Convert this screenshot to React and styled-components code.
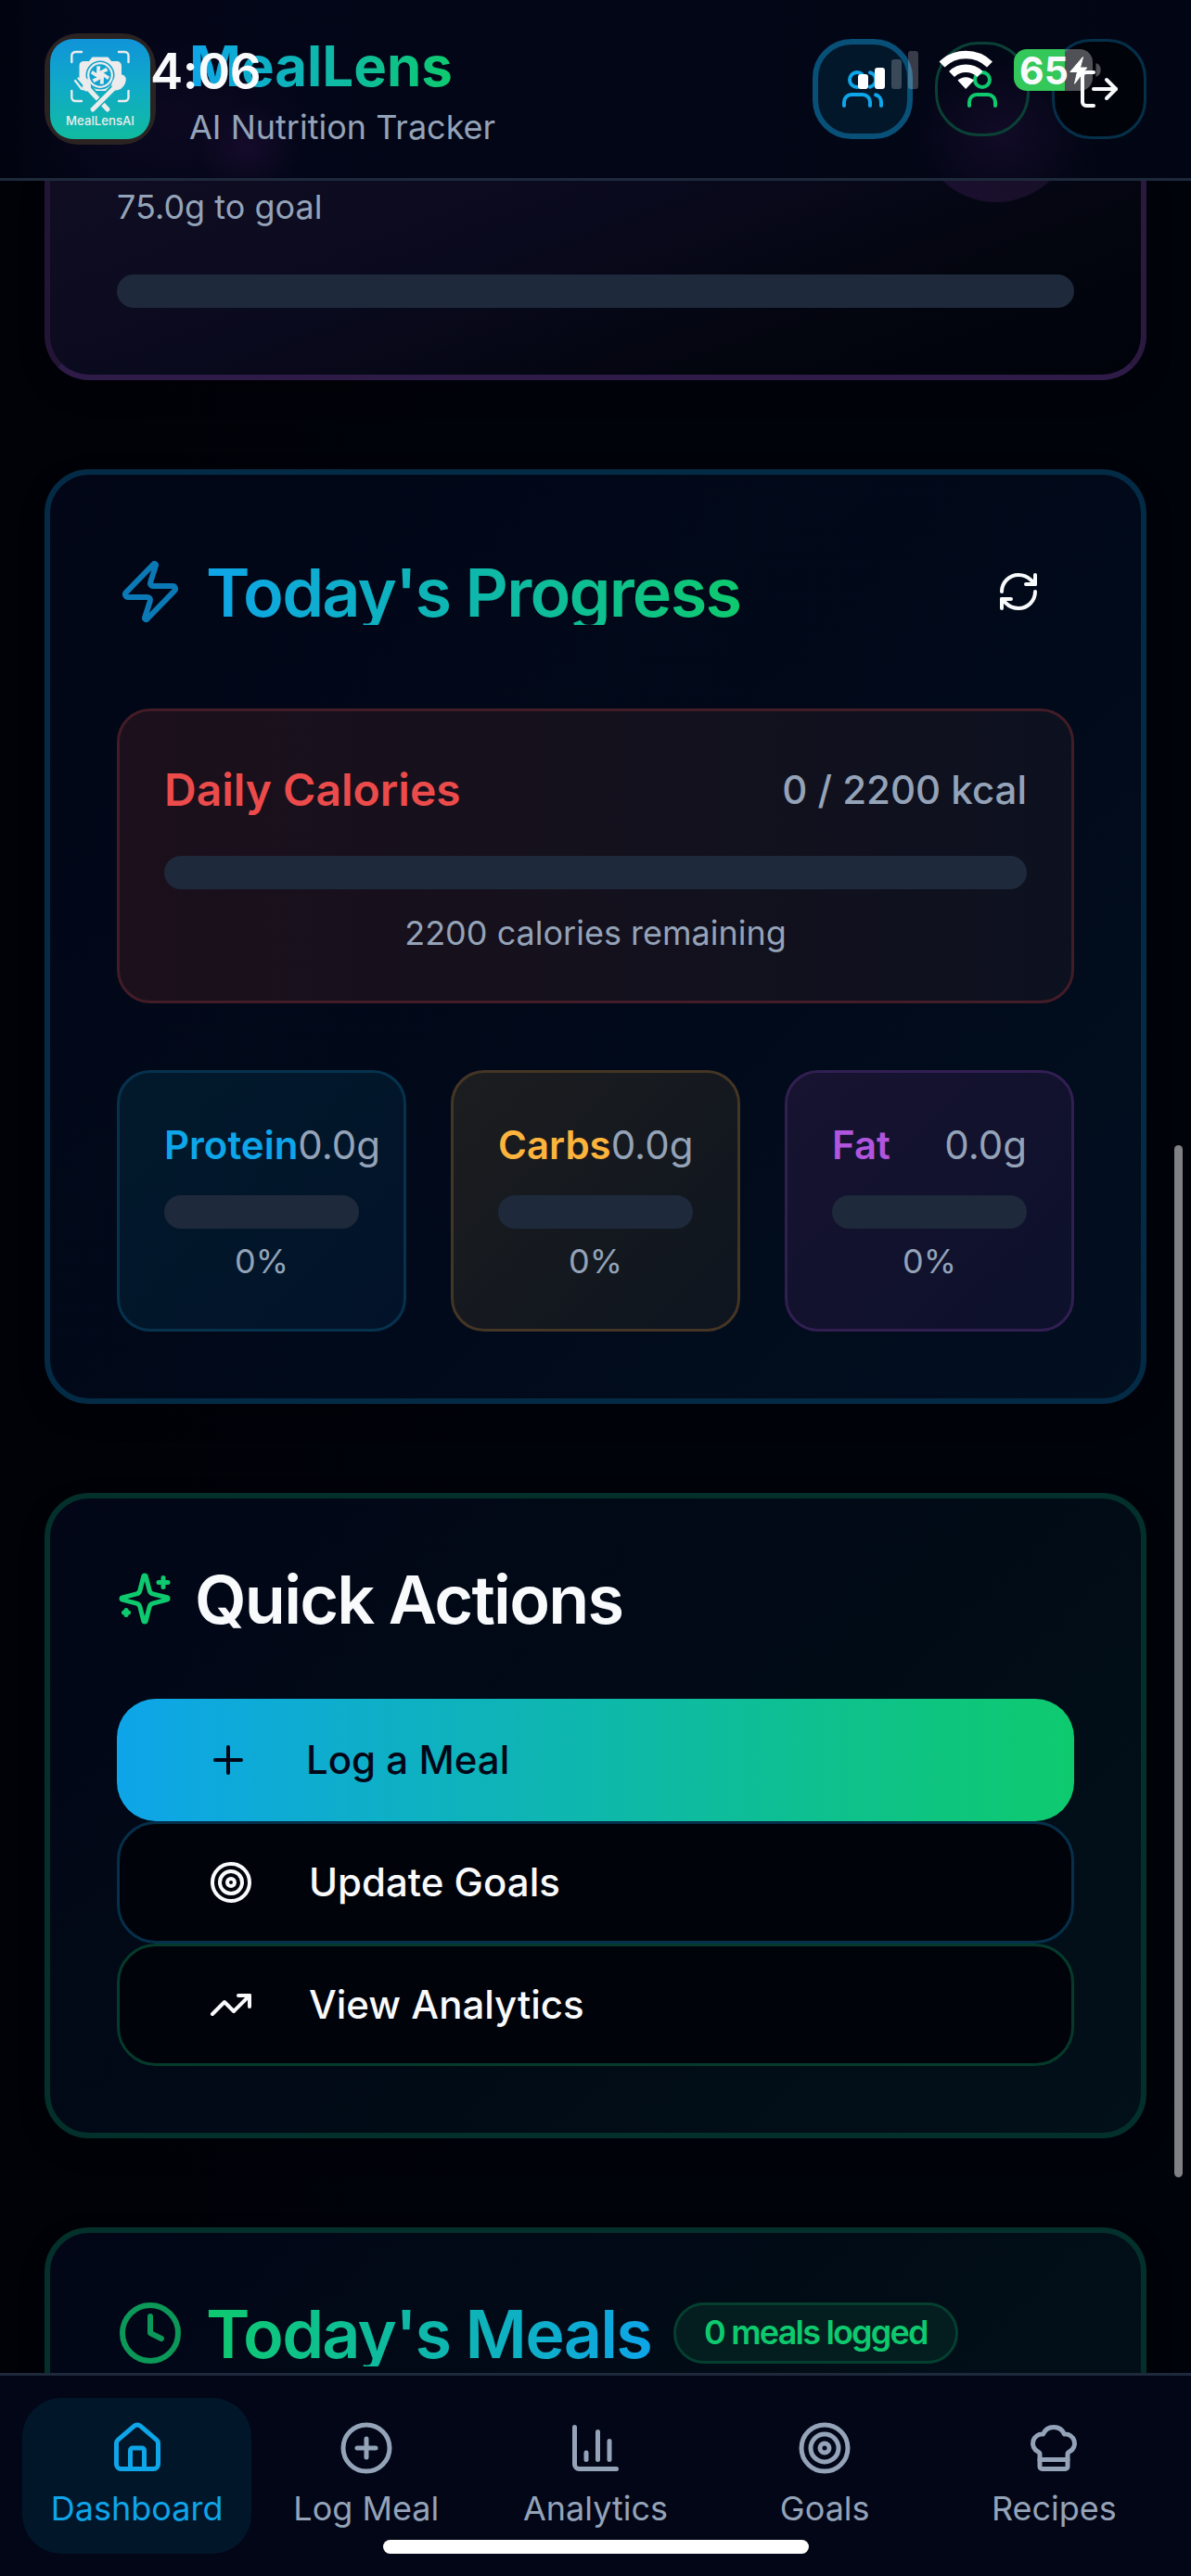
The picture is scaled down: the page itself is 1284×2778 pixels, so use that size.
import React from "react";
import styled, { createGlobalStyle, css } from "styled-components";
import {
  Users, User, LogOut, Zap, RefreshCw, Plus, Target, TrendingUp,
  Clock, House, CirclePlus, ChartColumn, ChefHat,
} from "lucide-react";

const c = {
  blue: "#0ea5e9",
  green: "#0eca6e",
  muted: "#94a3b8",
  text: "#f8fafc",
  track: "#1e293b",
};

const GlobalStyle = createGlobalStyle`
  * { box-sizing: border-box; margin: 0; }
  body {
    margin: 0;
    background: #01030b;
    color: ${c.text};
    font-family: Inter, "Liberation Sans", sans-serif;
  }
`;

const Screen = styled.div`
  position: relative;
  display: flex;
  flex-direction: column;
  width: 1284px;
  height: 2778px;
  overflow: hidden;
  background: linear-gradient(90deg, #000207, #01030b 40%, #01030b);
`;

const Header = styled.header`
  display: flex;
  align-items: center;
  flex: none;
  gap: 36px;
  height: 195px;
  padding: 0 48px;
  border-bottom: 3px solid #1e293b;
  background:
    radial-gradient(ellipse 55px 50px at 268px 160px, rgba(70, 25, 95, 0.22), transparent),
    radial-gradient(ellipse 160px 90px at 190px 130px, rgba(60, 22, 85, 0.15), transparent),
    radial-gradient(ellipse 100px 90px at 1080px 145px, rgba(70, 25, 95, 0.24), transparent),
    linear-gradient(90deg, #01040f, #040618 8%, #020617 40%, #020614);
`;

const LogoTile = styled.div`
  flex: none;
  width: 120px;
  height: 120px;
  padding: 6px;
  border-radius: 36px;
  background: #2b2322;
`;

const LogoFace = styled.div`
  display: flex;
  flex-direction: column;
  align-items: center;
  height: 108px;
  padding-top: 12px;
  border-radius: 25px;
  background: linear-gradient(#1094d8, #10a9c9 45%, #10bba0);
  font-size: 13.2px;
  font-weight: 500;
  line-height: 16px;
  color: #ececec;
`;

const Brand = styled.div`
  flex: 1;
  padding-bottom: 2px;
`;

const gradientText = css`
  width: max-content;
  background: ${(p) =>
    p.$reverse
      ? `linear-gradient(90deg, ${c.green}, ${c.blue})`
      : `linear-gradient(90deg, ${c.blue}, ${c.green})`};
  -webkit-background-clip: text;
  background-clip: text;
  color: transparent;
`;

const BrandName = styled.h1`
  ${gradientText}
  font-size: 60px;
  font-weight: 700;
  line-height: 84px;
`;

const Tagline = styled.p`
  font-size: 36px;
  line-height: 48px;
  color: ${c.muted};
`;

const HeaderActions = styled.div`
  display: flex;
  align-items: center;
  gap: 24px;
`;

const RoundButton = styled.button`
  display: grid;
  place-items: center;
  width: ${(p) => p.$w}px;
  height: ${(p) => p.$h}px;
  padding: 0;
  border: ${(p) => p.$line}px solid ${(p) => p.$edge};
  border-radius: ${(p) => p.$radius}px;
  background: ${(p) => p.$fill};
  color: ${(p) => p.$ink};
`;

const Main = styled.main`
  display: flex;
  flex-direction: column;
  gap: 96px;
  flex: 1;
  min-height: 0;
  padding: 0 48px;
  overflow: hidden;
`;

const Card = styled.section`
  flex: none;
  padding: 72px;
  border: 6px solid ${(p) => p.$edge};
  border-radius: 48px;
  background: ${(p) => p.$fill};
  box-shadow: 0 12px 30px rgba(0, 0, 0, 0.2);
`;

const GoalCard = styled(Card)`
  padding-top: 0;
  border-color: #24153a #2b1940 #2e1b47 #241537;
  border-top: 0;
  border-radius: 0 0 48px 48px;
`;

const GoalRow = styled.div`
  display: flex;
  align-items: flex-start;
  justify-content: space-between;
  margin-bottom: 49px;
`;

const Caption = styled.p`
  padding-top: ${(p) => p.$top || 0}px;
  padding-bottom: ${(p) => p.$bottom || 0}px;
  font-size: 36px;
  line-height: 48px;
  color: ${c.muted};
  text-align: ${(p) => (p.$center ? "center" : "left")};
`;

const GoalDisc = styled.div`
  width: 168px;
  height: 168px;
  margin-top: -145px;
  border-radius: 50%;
  background: linear-gradient(90deg, #1b1030, #180f28);
`;

const Track = styled.div`
  height: 36px;
  border-radius: 18px;
  background: ${c.track};
`;

const CardHead = styled.div`
  display: flex;
  align-items: center;
  gap: 24px;
  height: ${(p) => p.$h}px;
  margin-bottom: 72px;
`;

const Heading = styled.h2`
  ${(p) => !p.$plain && gradientText}
  padding-top: 2px;
  font-size: 72px;
  font-weight: 600;
  line-height: 70px;
  letter-spacing: -1.8px;
`;

const GhostButton = styled.button`
  display: grid;
  place-items: center;
  width: 120px;
  height: 108px;
  margin-left: auto;
  padding: 0;
  border: 0;
  background: none;
  color: ${c.text};
`;

const Panel = styled.div`
  min-width: 0;
  padding: 48px;
  border: 3px solid ${(p) => p.$edge};
  border-radius: 36px;
  background: ${(p) => p.$fill};
`;

const CalorieRow = styled.div`
  display: flex;
  align-items: center;
  justify-content: space-between;
  height: 72px;
  margin-bottom: 36px;
`;

const CalorieLabel = styled.h3`
  font-size: 48px;
  font-weight: 600;
  color: #eb4b4b;
`;

const CalorieValue = styled.span`
  font-size: 42px;
  font-weight: 500;
  color: ${c.muted};
`;

const MacroGrid = styled.div`
  display: grid;
  grid-template-columns: repeat(3, 1fr);
  gap: 48px;
  margin-top: 72px;
`;

const MacroRow = styled.div`
  display: flex;
  justify-content: space-between;
  margin-bottom: 24px;
  font-size: 42px;
  line-height: 60px;
`;

const MacroName = styled.span`
  font-weight: 600;
  color: ${(p) => p.$ink};
`;

const MacroValue = styled.span`
  color: ${c.muted};
`;

const Actions = styled.div`
  display: flex;
  flex-direction: column;
`;

const ActionButton = styled.button`
  display: flex;
  align-items: center;
  gap: 60px;
  height: 132px;
  padding: 0 96px;
  border: ${(p) => (p.$edge ? `3px solid ${p.$edge}` : "0")};
  border-radius: 42px;
  background: ${(p) => p.$fill || "#01030b"};
  color: ${(p) => p.$ink || c.text};
  font: 500 42px/60px Inter, "Liberation Sans", sans-serif;
`;

const Badge = styled.span`
  height: 66px;
  padding: 0 30px;
  border: 3px solid #053f30;
  border-radius: 33px;
  background: #041d1f;
  font-size: 36px;
  font-weight: 600;
  line-height: 58px;
  letter-spacing: -1.8px;
  color: ${c.green};
`;

const Nav = styled.nav`
  display: grid;
  grid-template-columns: repeat(5, 1fr);
  align-items: start;
  flex: none;
  height: 219px;
  padding: 24px 24px 0;
  border-top: 3px solid #1e293b;
  background: #020617;
`;

const NavItem = styled.a`
  display: flex;
  flex-direction: column;
  align-items: center;
  gap: 11px;
  height: 168px;
  padding: 24px 0;
  border-radius: 42px;
  background: ${(p) => (p.$active ? "#02162a" : "none")};
  color: ${(p) => (p.$active ? c.blue : c.muted)};
  font-size: 36px;
  line-height: 48px;
`;

const StatusTime = styled.span`
  position: absolute;
  left: 162px;
  top: 47px;
  font-size: 53px;
  font-weight: 600;
  line-height: 60px;
  letter-spacing: -0.5px;
`;

const StatusIcons = styled.svg`
  position: absolute;
  left: 920px;
  top: 48px;
`;

const BatteryLevel = styled.span`
  position: absolute;
  left: 1099px;
  top: 51px;
  font-size: 41px;
  font-weight: 700;
  line-height: 50px;
`;

const ScrollThumb = styled.div`
  position: absolute;
  right: 9px;
  top: 1235px;
  width: 9px;
  height: 1113px;
  border-radius: 5px;
  background: #808184;
`;

const HomeIndicator = styled.div`
  position: absolute;
  left: 413px;
  bottom: 24px;
  width: 459px;
  height: 15px;
  border-radius: 8px;
  background: #fff;
`;

function LogoMark() {
  return (
    <svg width="64" height="68" viewBox="0 0 64 68" fill="none">
      <path
        d="M1.3 13V6a4 4 0 0 1 4-4H12M52 2h6.500a4 4 0 0 1 4 4v7M62.500 44v7a4 4 0 0 1-4 4H52M12 55H5.300a4 4 0 0 1-4-4v-7"
        stroke="#ececec" strokeWidth="2.400" strokeLinecap="round"
      />
      <path d="M14 12h6l3.500-4.500h17L44 12h6a5 5 0 0 1 5 5v14L44 44H22L9.500 31V17A5 5 0 0 1 14 12Z" fill="#ececec" />
      <circle cx="32" cy="27" r="15.500" fill="#10a3cf" />
      <circle cx="32" cy="27" r="12.800" stroke="#ececec" strokeWidth="2.300" />
      <circle cx="32" cy="27" r="4" fill="#ececec" />
      {[0, 60, 120, 180, 240, 300].map((a) => (
        <path key={a} d="M30 23.500 38.500 19l2 3.500-6 2.500Z" fill="#ececec" transform={`rotate(${a} 32 27)`} />
      ))}
      <path d="m17 38 26 29M48 39 22 67" stroke="#10afba" strokeWidth="8" />
      <path d="m16 38 24 26" stroke="#ececec" strokeWidth="5" strokeLinecap="round" />
      <path d="M47 41 24 64" stroke="#10afba" strokeWidth="8" />
      <path d="M49 39 24 64" stroke="#ececec" strokeWidth="5" strokeLinecap="round" />
      <path d="m5 33 7 9 6 1 3-4-1-5-8-6M8.500 30.500l7 8" stroke="#ececec" strokeWidth="2.200" strokeLinecap="round" strokeLinejoin="round" />
      <path d="m12 40 7-6 3 6-5 5Z" fill="#ececec" />
      <ellipse cx="52" cy="35" rx="6.500" ry="9.500" transform="rotate(38 52 35)" fill="#ececec" />
    </svg>
  );
}

function SparklesIcon() {
  return (
    <svg
      width="60" height="60" viewBox="0 0 24 24" fill="none"
      stroke={c.green} strokeWidth="2" strokeLinecap="round" strokeLinejoin="round"
    >
      <path d="M9.937 15.500A2 2 0 0 0 8.500 14.063l-6.135-1.582a.5.5 0 0 1 0-.962L8.500 9.936A2 2 0 0 0 9.937 8.500l1.582-6.135a.5.5 0 0 1 .963 0L14.063 8.500A2 2 0 0 0 15.500 9.937l6.135 1.581a.5.5 0 0 1 0 .964L15.500 14.063a2 2 0 0 0-1.437 1.437l-1.582 6.135a.5.5 0 0 1-.963 0z" />
      <path d="M20 3v4" />
      <path d="M22 5h-4" />
      <path d="M4 17v2" />
      <path d="M5 18H3" />
    </svg>
  );
}

function StatusGlyphs() {
  return (
    <StatusIcons width="270" height="54" viewBox="920 48 270 54">
      <g fill="#fff">
        <rect x="925" y="80" width="11" height="16" rx="3" />
        <rect x="943" y="73" width="11" height="23" rx="3" />
        <rect x="961" y="64" width="11" height="32" rx="3" opacity=".22" />
        <rect x="979" y="55" width="11" height="41" rx="3" opacity=".22" />
      </g>
      <g fill="none" stroke="#fff" strokeWidth="8.500">
        <path d="M1015.500 69.500a37 37 0 0 1 51.500 0" />
        <path d="M1026 80a22 22 0 0 1 30.500 0" />
      </g>
      <path d="M1041.200 96l-8.700-9.300a12.500 12.500 0 0 1 17.400 0Z" fill="#fff" />
      <path d="M1148 53h16a14 14 0 0 1 14 14v17a14 14 0 0 1-14 14h-16Z" fill="rgba(255,255,255,.31)" />
      <path d="M1148 53h-41a14 14 0 0 0-14 14v17a14 14 0 0 0 14 14h41Z" fill="#34c759" />
      <path d="M1181.500 68a8 8 0 0 1 0 15Z" fill="rgba(255,255,255,.31)" />
      <path
        d="M1167.500 61.500 1153.800 77.500h7.700L1158.500 90.200 1171.800 73h-7.300Z"
        fill="#fff" stroke="#fff" strokeWidth="1" strokeLinejoin="round"
      />
    </StatusIcons>
  );
}

const macros = [
  { name: "Protein", ink: c.blue, edge: "#06324e", fill: "linear-gradient(135deg, #02192b, #021329)" },
  { name: "Carbs", ink: "#fdb43c", edge: "#443524", fill: "linear-gradient(135deg, #1c1d1f, #0e151f)" },
  { name: "Fat", ink: "#b055dd", edge: "#321f52", fill: "linear-gradient(135deg, #171330, #0d112b)" },
];

const tabs = [
  { label: "Dashboard", Icon: House, active: true },
  { label: "Log Meal", Icon: CirclePlus },
  { label: "Analytics", Icon: ChartColumn },
  { label: "Goals", Icon: Target },
  { label: "Recipes", Icon: ChefHat },
];

export default function App() {
  return (
    <Screen>
      <GlobalStyle />
      <Header>
        <LogoTile>
          <LogoFace>
            <LogoMark />
            MealLensAI
          </LogoFace>
        </LogoTile>
        <Brand>
          <BrandName>MealLens</BrandName>
          <Tagline>AI Nutrition Tracker</Tagline>
        </Brand>
        <HeaderActions>
          <RoundButton $w={108} $h={108} $line={6} $radius={42} $edge="#095078" $fill="#03172a" $ink={c.blue}>
            <Users size={48} />
          </RoundButton>
          <RoundButton $w={102} $h={102} $line={3} $radius={47} $edge="#0a4035" $fill="none" $ink={c.green}>
            <User size={48} />
          </RoundButton>
          <RoundButton $w={102} $h={108} $line={3} $radius={42} $edge="#05304a" $fill="#01030b" $ink={c.text}>
            <LogOut size={48} />
          </RoundButton>
        </HeaderActions>
      </Header>

      <Main>
        <GoalCard $fill="linear-gradient(160deg, #100d22, #0a0a1e 38%, #03050f 72%, #01030b)">
          <GoalRow>
            <Caption $top={4}>75.0g to goal</Caption>
            <GoalDisc />
          </GoalRow>
          <Track />
        </GoalCard>

        <Card $edge="#042b45" $fill="linear-gradient(135deg, #020617, #010a1a 60%, #020f20)">
          <CardHead $h={108}>
            <Zap size={72} color="#0b79b5" />
            <Heading>Today's Progress</Heading>
            <GhostButton>
              <RefreshCw size={48} />
            </GhostButton>
          </CardHead>
          <Panel $edge="#421c27" $fill="linear-gradient(90deg, #1b101b, #0d111f)">
            <CalorieRow>
              <CalorieLabel>Daily Calories</CalorieLabel>
              <CalorieValue>0 / 2200 kcal</CalorieValue>
            </CalorieRow>
            <Track />
            <Caption $center $top={23} $bottom={1}>2200 calories remaining</Caption>
          </Panel>
          <MacroGrid>
            {macros.map((m) => (
              <Panel key={m.name} $edge={m.edge} $fill={m.fill}>
                <MacroRow>
                  <MacroName $ink={m.ink}>{m.name}</MacroName>
                  <MacroValue>0.0g</MacroValue>
                </MacroRow>
                <Track />
                <Caption $center $top={11} $bottom={1}>0%</Caption>
              </Panel>
            ))}
          </MacroGrid>
        </Card>

        <Card $edge="#04302b" $fill="linear-gradient(135deg, #020617, #010b16 55%, #021019)">
          <CardHead $h={72}>
            <SparklesIcon />
            <Heading $plain>Quick Actions</Heading>
          </CardHead>
          <Actions>
            <ActionButton $fill={`linear-gradient(90deg, ${c.blue}, ${c.green})`} $ink="#020617">
              <Plus size={48} />
              Log a Meal
            </ActionButton>
            <ActionButton $edge="#05304b">
              <Target size={48} />
              Update Goals
            </ActionButton>
            <ActionButton $edge="#053b2a">
              <TrendingUp size={48} />
              View Analytics
            </ActionButton>
          </Actions>
        </Card>

        <Card $edge="#04302b" $fill="linear-gradient(135deg, #020617, #010b16 55%, #021019)">
          <CardHead $h={72}>
            <Clock size={72} color="#0b9858" />
            <Heading $reverse>Today's Meals</Heading>
            <Badge>0 meals logged</Badge>
          </CardHead>
        </Card>
      </Main>

      <Nav>
        {tabs.map(({ label, Icon, active }) => (
          <NavItem key={label} $active={active}>
            <Icon size={60} />
            {label}
          </NavItem>
        ))}
      </Nav>

      <StatusTime>4:06</StatusTime>
      <StatusGlyphs />
      <BatteryLevel>65</BatteryLevel>
      <ScrollThumb />
      <HomeIndicator />
    </Screen>
  );
}
